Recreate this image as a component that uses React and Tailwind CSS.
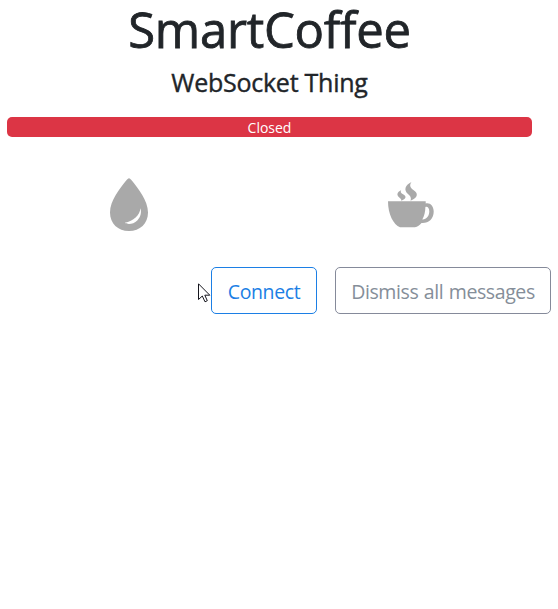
function Droplet() {
  return (
    <svg className="h-[54px] w-[38px]" viewBox="0 0 38 54" fill="#a9a9a9" aria-hidden="true">
      <path d="M19 .3C19.800 .3 20.800 1.300 22 2.800C28 10.500 38 22.500 38 34.500C38 45.500 30 53 19 53S0 45.500 0 34.500C0 22.500 10 10.500 16 2.800C17.200 1.300 18.200 .3 19 .3Z" />
      <path fill="#fff" d="M30.500 30.300C29.800 37 23.500 43.300 14.800 44.700C17.500 46.800 23.500 46.200 27.300 42.400C30.600 39.100 31.700 34.500 30.500 30.300Z" />
    </svg>
  );
}

function CoffeeCup() {
  return (
    <svg className="h-[46px] w-[46px]" viewBox="0 0 46 46" fill="#a9a9a9" aria-hidden="true">
      <path d="M0 19.200H37.700V21.400C41.800 20.200 45.700 23.800 45.700 29.500C45.700 37 40.500 41.500 33.500 41C31.800 43 29.500 45.200 27 45.200H12C5.500 42.500 0 32.500 0 19.200ZM37.400 25C37.300 30 36.300 34.200 34.300 37.400C38.300 37.700 41.300 34 41.300 29.500C41.300 26 39.500 24.300 37.400 25Z" />
      <path d="M23.500 0C17.300 2.700 15.300 8 20 12C23 14.500 23.300 16.300 22.500 18.700C30 15.800 30.500 11.300 25.700 8.300C21.800 5.800 21.300 3 23.500 0Z" />
      <path d="M13.200 8.300C8.900 10.300 8.300 13 11.300 15.500C13.100 17 13.500 17.500 13.200 18.800C18.200 17 18.700 14.300 15.500 12.500C12.700 11 12.200 10 13.200 8.300Z" />
    </svg>
  );
}

function Cursor() {
  return (
    <svg className="pointer-events-none absolute top-[16px] -left-[13px] h-[20px] w-[13px]" viewBox="0 0 13 20" aria-hidden="true">
      <path
        d="M.5 .8V16.500L4.300 13L7 18.800L9.300 17.700L6.800 12.200H11.800Z"
        fill="#fff"
        stroke="#15151d"
        strokeWidth="1"
      />
    </svg>
  );
}

export default function App() {
  return (
    <main className="h-[609px] w-[558px] bg-white pl-[7px] font-['Open_Sans','Noto_Sans',sans-serif] text-[#212529]">
      <header className="flex w-[525px] flex-col items-center whitespace-nowrap">
        <h1 className="h-[66px] text-[49px] leading-[58px] font-medium tracking-[-0.25px] [-webkit-text-stroke:0.8px_#212529]">
          SmartCoffee
        </h1>
        <h2 className="h-[51px] text-[25px] leading-[33px] font-medium tracking-[-0.25px] [-webkit-text-stroke:0.4px_#212529]">
          WebSocket Thing
        </h2>
      </header>
      <div className="h-5 w-[525px] rounded-[5px] bg-[#dc3545] text-center text-[14px] leading-[21px] text-white">
        Closed
      </div>
      <div className="mt-[41px] flex h-[54px] pl-[103px]">
        <Droplet />
        <div className="mt-[4px] ml-[239.500px]">
          <CoffeeCup />
        </div>
      </div>
      <div className="mt-[35px] ml-[204px] flex gap-[18px] text-[19.500px] leading-[47px] tracking-[-0.4px] whitespace-nowrap">
        <div className="relative">
          <button className="flex h-[47px] w-[106px] items-center justify-center rounded-[5px] border border-[#1c7fe5] pt-px text-[#1c7fe5]">
            Connect
          </button>
          <Cursor />
        </div>
        <button className="flex h-[47px] w-[216px] items-center justify-center rounded-[5px] border border-[#858a9a] pt-px text-[#858e99] [word-spacing:0.8px]">
          Dismiss all messages
        </button>
      </div>
    </main>
  );
}
